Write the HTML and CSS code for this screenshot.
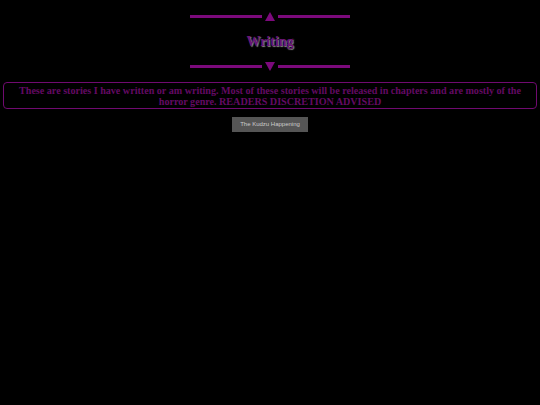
FILE: index.html
```html
<!DOCTYPE html>
<html>
<head>
<meta charset="utf-8">
<title>Writing</title>
<link rel="stylesheet" href="styles.css">
</head>
<body>
<header class="banner">
  <div class="divider">
    <span class="rule"></span>
    <span class="arrow arrow-up"></span>
    <span class="rule"></span>
  </div>
  <h1 class="title">Writing</h1>
  <div class="divider">
    <span class="rule"></span>
    <span class="arrow arrow-down"></span>
    <span class="rule"></span>
  </div>
</header>
<p class="intro">These are stories I have written or am writing. Most of these stories will be released in chapters and are mostly of the horror genre. READERS DISCRETION ADVISED</p>
<nav class="stories">
  <a class="story" href="#">The Kudzu Happening</a>
</nav>
</body>
</html>
```

FILE: styles.css
```css
html, body {
  background: #000;
}
body {
  margin: 0;
  padding: 12px 3px 0;
  font-family: "Liberation Serif", "Times New Roman", serif;
}
.banner {
  width: 160px;
  margin: 0 auto;
  display: flex;
  flex-direction: column;
  align-items: stretch;
}
.divider {
  display: flex;
  align-items: center;
  gap: 3px;
  height: 9px;
}
.rule {
  flex: 1;
  height: 3px;
  background: #7c0a7c;
}
.arrow {
  width: 0;
  height: 0;
  border-left: 5px solid transparent;
  border-right: 5px solid transparent;
}
.arrow-up {
  border-bottom: 9px solid #7c0a7c;
}
.arrow-down {
  border-top: 9px solid #7c0a7c;
}
.title {
  margin: 0;
  height: 41px;
  line-height: 41px;
  text-align: center;
  font-size: 14px;
  font-weight: bold;
  color: #6a1478;
  text-shadow: 1px 1px 1px #8a8a8a;
}
.intro {
  margin: 11px 0 0;
  padding: 2px 10px 1px;
  border: 1px solid #700a70;
  border-radius: 4px;
  text-align: center;
  font-size: 10.1px;
  line-height: 11px;
  font-weight: bold;
  color: #640a64;
}
.stories {
  display: flex;
  justify-content: center;
  margin-top: 8px;
}
.story {
  display: block;
  width: 76px;
  height: 15px;
  line-height: 15px;
  background: #555;
  color: #ccc;
  text-align: center;
  text-decoration: none;
  font-family: "Liberation Sans", Arial, sans-serif;
  font-size: 6px;
}
```
